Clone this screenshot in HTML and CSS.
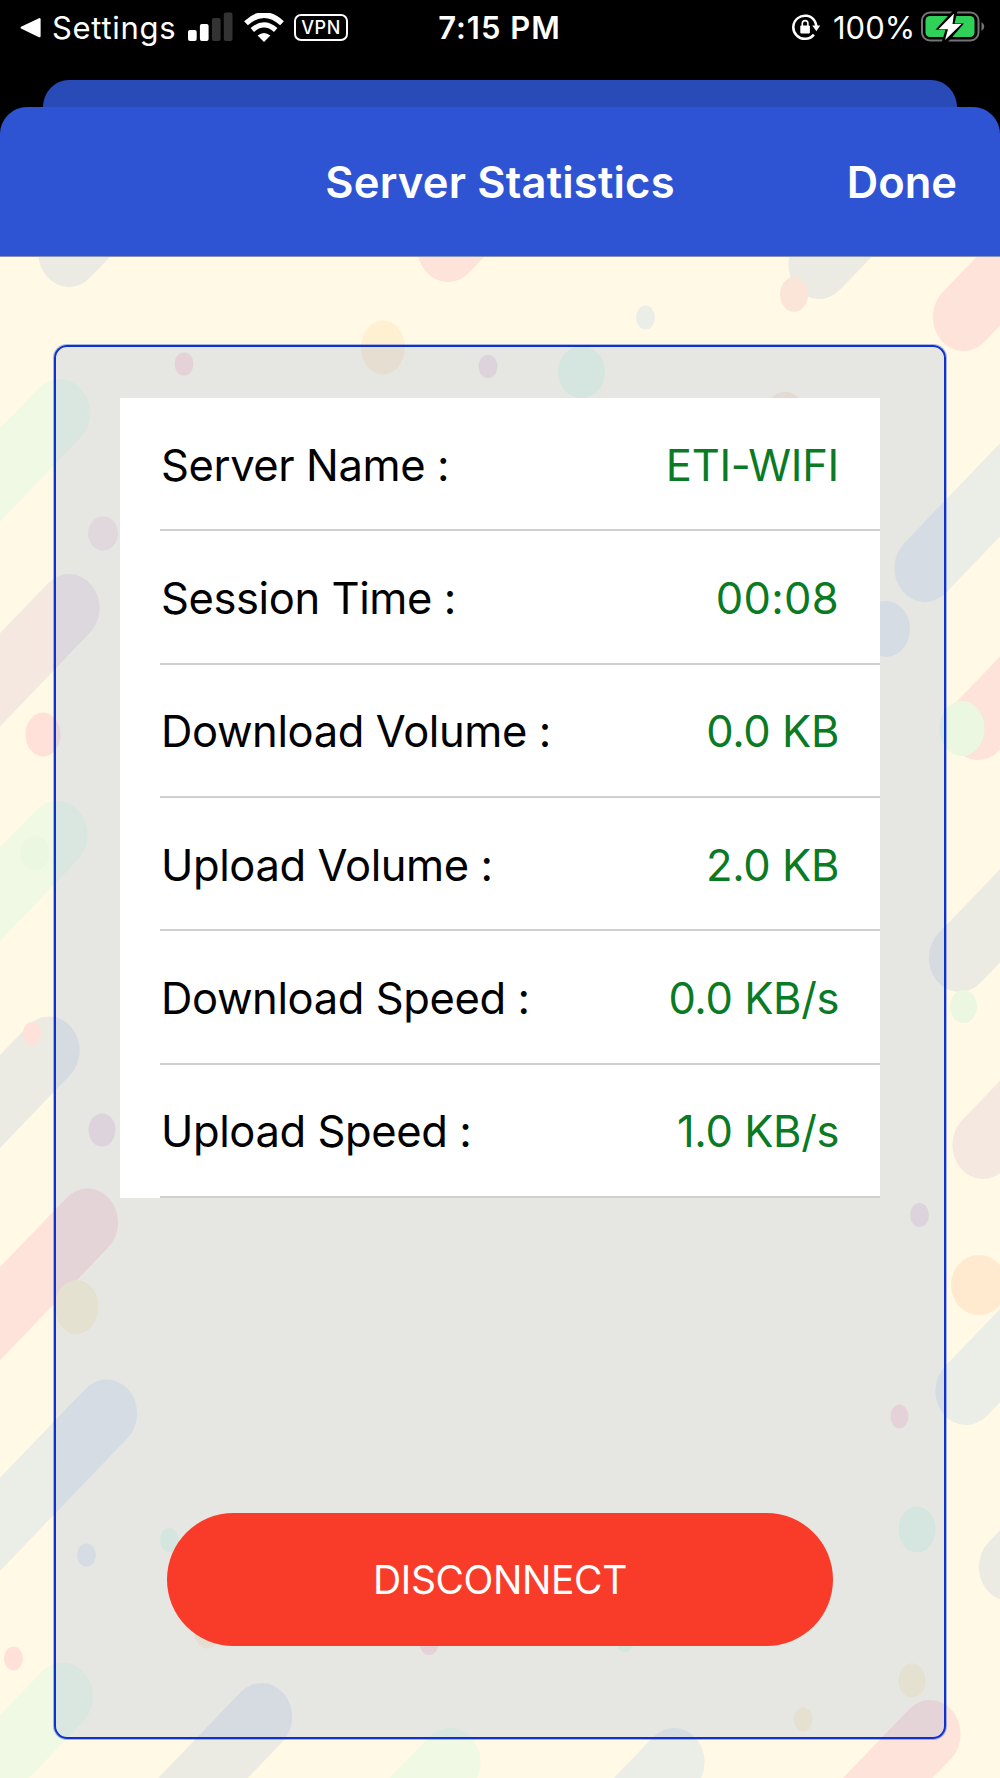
FILE: index.html
```html
<!DOCTYPE html>
<html lang="en">
<head>
<meta charset="utf-8">
<title>Server Statistics</title>
<link rel="stylesheet" href="styles.css">
</head>
<body>
<div class="screen">
  <div class="status-bar">
    <div class="status-left">
      <svg class="back-arrow" width="22" height="22" viewBox="0 0 22 22"><path d="M19 1.2 L1.5 9.6 Q-.5 10.7 1.5 11.8 L19 20.2 Q20.6 20.8 20.6 19 V2.4 Q20.6 .6 19 1.2Z" fill="#fff"/></svg>
      <span class="back-label">Settings</span>
      <svg class="signal" width="46" height="30" viewBox="0 0 46 30">
        <rect x="0" y="18" width="8.7" height="11" rx="2" fill="#fff"/>
        <rect x="11.9" y="12" width="8.7" height="17" rx="2" fill="#fff"/>
        <rect x="23.9" y="6" width="8.7" height="23" rx="2" fill="#333"/>
        <rect x="35.8" y="0.5" width="8.7" height="28.5" rx="2" fill="#333"/>
      </svg>
      <svg class="wifi" width="42" height="30" viewBox="0 0 42 30">
        <path d="M3 10.2 Q21 -6.2 39 10.2" fill="none" stroke="#fff" stroke-width="5.6"/>
        <path d="M9.3 17 Q21 6.8 32.7 17" fill="none" stroke="#fff" stroke-width="5.2"/>
        <path d="M14.6 22.6 Q21 17.2 27.4 22.6 L21 29Z" fill="#fff"/>
      </svg>
      <span class="vpn">VPN</span>
    </div>
    <div class="clock">7:15 PM</div>
    <div class="status-right">
      <svg class="lock" width="29" height="27" viewBox="0 0 29 27">
        <path d="M22.8 7.2 A11.6 11.6 0 1 0 21.9 20.6" fill="none" stroke="#fff" stroke-width="2.5"/>
        <path d="M20.2 11.6 H28.2 L24.4 17.2Z" fill="#fff"/>
        <path d="M22.6 7 Q24 9 24.3 12" fill="none" stroke="#fff" stroke-width="2.5"/>
        <rect x="8.3" y="11.6" width="9.6" height="8" rx="1" fill="#fff"/>
        <path d="M10.3 12 V9.4 a2.8 2.8 0 0 1 5.6 0 V12" fill="none" stroke="#fff" stroke-width="1.6"/>
      </svg>
      <span class="percent">100%</span>
      <svg class="battery" width="64" height="32" viewBox="0 0 64 32">
        <rect x="1" y="1.5" width="56.5" height="28" rx="8" fill="none" stroke="#747474" stroke-width="2"/>
        <path d="M60.5 11 Q63.2 12.5 63.2 15.5 Q63.2 18.5 60.5 20Z" fill="#747474"/>
        <rect x="4.5" y="5" width="49" height="21" rx="4.5" fill="#30d158"/>
        <path d="M31.5 0 L14.5 18.8 H24.5 L20.5 32 H26 L43 12.4 H33.5 L36.5 0Z" fill="#000"/>
        <path d="M33 2.5 L17.5 18.3 H27 L24 29 L40.5 12.9 H31.5Z" fill="#fff"/>
      </svg>
    </div>
  </div>
  <div class="sheet-behind"></div>
  <main class="sheet">
    <header class="nav-bar">
      <h1 class="nav-title">Server Statistics</h1>
      <button class="nav-done">Done</button>
    </header>
    <div class="content">
      <svg class="confetti" width="1000" height="1521" viewBox="0 257 1000 1521">
        <defs>
          <path id="up" d="M0 0 L300 281" transform="scale(.9 -1)"/>
          <path id="down" d="M0 0 L-300 281" transform="scale(.9 1)"/>
        </defs>
        <g class="streaks">
          <use href="#up" x="69" y="253" class="slate"/>
          <use href="#up" x="448" y="248" class="red"/>
          <use href="#up" x="819" y="265" class="slate"/>
          <use href="#up" x="963.5" y="317" class="red"/>
          <use href="#up" x="925" y="568" class="blue"/>
          <use href="#up" x="978" y="726" class="red"/>
          <use href="#up" x="959.5" y="958" class="slate"/>
          <use href="#up" x="983" y="1145" class="mauve"/>
          <use href="#up" x="966" y="1391" class="blue"/>
          <use href="#up" x="1009.5" y="1567" class="slate"/>
          <use href="#down" x="59.5" y="413" class="green"/>
          <use href="#down" x="69" y="608" class="mauve"/>
          <use href="#down" x="57" y="835" class="green"/>
          <use href="#down" x="49" y="1050.5" class="slate"/>
          <use href="#down" x="87.5" y="1222.5" class="red"/>
          <use href="#down" x="106.5" y="1413.5" class="blue"/>
          <use href="#down" x="62.5" y="1696.5" class="green"/>
          <use href="#down" x="261.5" y="1717" class="slate"/>
          <use href="#down" x="450" y="1762" class="green"/>
          <use href="#down" x="674" y="1762" class="blue"/>
          <use href="#down" x="930" y="1734" class="red"/>
        </g>
        <g class="dots">
          <ellipse cx="184" cy="364" rx="9.5" ry="11.5" class="pink"/>
          <ellipse cx="383" cy="347.5" rx="22" ry="27" class="amber"/>
          <ellipse cx="488" cy="366.5" rx="9.5" ry="11.5" class="violet"/>
          <ellipse cx="581.5" cy="372" rx="23.5" ry="26" class="teal"/>
          <ellipse cx="645.5" cy="317.5" rx="9.5" ry="12" class="blue"/>
          <ellipse cx="794" cy="294.5" rx="14" ry="17.5" class="coral"/>
          <ellipse cx="785" cy="410" rx="18" ry="18" class="peach"/>
          <ellipse cx="103" cy="533.5" rx="15" ry="17" class="rose"/>
          <ellipse cx="43" cy="734.5" rx="17.5" ry="22" class="red"/>
          <ellipse cx="35" cy="853" rx="14.5" ry="17" class="mint"/>
          <ellipse cx="886" cy="629" rx="24" ry="28" class="blue"/>
          <ellipse cx="962" cy="728.5" rx="22.5" ry="27.5" class="teal"/>
          <ellipse cx="32" cy="1033.5" rx="9" ry="11.5" class="red"/>
          <ellipse cx="102" cy="1130" rx="13.5" ry="16.5" class="violet"/>
          <ellipse cx="76.5" cy="1307" rx="22" ry="27" class="yellow"/>
          <ellipse cx="963.5" cy="1006.5" rx="13.5" ry="16.5" class="teal"/>
          <ellipse cx="919.5" cy="1215" rx="9.5" ry="12" class="violet"/>
          <ellipse cx="979" cy="1285" rx="28" ry="30" class="orange"/>
          <ellipse cx="899.5" cy="1416.5" rx="9" ry="12" class="pink"/>
          <ellipse cx="917" cy="1529.5" rx="18.5" ry="23" class="teal"/>
          <ellipse cx="86.5" cy="1555" rx="9.5" ry="11.5" class="blue"/>
          <ellipse cx="169.5" cy="1540" rx="9.5" ry="12" class="teal"/>
          <ellipse cx="207.5" cy="1632.5" rx="13" ry="16" class="amber"/>
          <ellipse cx="429" cy="1643" rx="9.5" ry="12" class="pink"/>
          <ellipse cx="625" cy="1640" rx="9.5" ry="12" class="teal"/>
          <ellipse cx="912" cy="1680.5" rx="13.5" ry="17" class="yellow"/>
          <ellipse cx="803" cy="1719.5" rx="9.5" ry="12" class="yellow"/>
          <ellipse cx="13.5" cy="1658.5" rx="9.5" ry="12" class="red"/>
        </g>
      </svg>
      <section class="card">
        <dl class="stats">
          <div class="row"><dt>Server Name :</dt><dd class="name">ETI-WIFI</dd></div>
          <div class="row"><dt>Session Time :</dt><dd class="time">00:08</dd></div>
          <div class="row"><dt>Download Volume :</dt><dd>0.0 KB</dd></div>
          <div class="row"><dt>Upload Volume :</dt><dd>2.0 KB</dd></div>
          <div class="row"><dt>Download Speed :</dt><dd>0.0 KB/s</dd></div>
          <div class="row"><dt>Upload Speed :</dt><dd>1.0 KB/s</dd></div>
        </dl>
        <button class="disconnect">DISCONNECT</button>
      </section>
    </div>
  </main>
</div>
</body>
</html>
```
FILE: styles.css
```css
* { box-sizing: border-box; }
body { margin: 0; background: #000; font-family: Inter, "Liberation Sans", sans-serif; }
button { border: 0; padding: 0; background: none; font-family: inherit; cursor: pointer; }

.screen { width: 1000px; height: 1778px; overflow: hidden; display: flex; flex-direction: column; background: #000; }

.status-bar { height: 80px; flex: none; display: grid; grid-template-columns: 400px 198px 402px; color: #fff; font-size: 31px; line-height: 56px; }
.status-left { display: flex; align-items: flex-start; padding-left: 20px; }
.back-arrow { margin-top: 17px; }
.back-label { width: 135px; margin-left: 10px; white-space: nowrap; letter-spacing: .7px; }
.signal { margin: 12px 0 0 1px; }
.wifi { margin: 13px 0 0 9px; }
.vpn { margin: 14px 0 0 9px; width: 54px; height: 27px; border: 2px solid #fff; border-radius: 7px; font-size: 18px; font-weight: 500; line-height: 24px; text-align: center; letter-spacing: .6px; }
.clock { text-align: center; font-weight: 600; white-space: nowrap; letter-spacing: 1px; padding-left: 1px; }
.status-right { display: flex; align-items: flex-start; padding-left: 194px; }
.lock { margin-top: 14px; }
.percent { width: 81px; margin-left: 12px; white-space: nowrap; }
.battery { margin: 11px 0 0 7px; }

.sheet-behind { flex: none; height: 27px; margin: 0 43px; background: #294bb8; border-radius: 26px 26px 0 0 / 27px 27px 0 0; }
.sheet { flex: 1; display: flex; flex-direction: column; border-radius: 27px 27px 0 0; overflow: hidden; }

.nav-bar { flex: none; height: 150px; display: grid; grid-template-columns: 1fr 360px 1fr; align-items: center; padding: 1px 43px 0; background: #2e54d3; color: #fff; border-bottom: 1px solid #8b93b4; }
.nav-title { grid-column: 2; margin: 0; text-align: center; white-space: nowrap; font-size: 43.5px; font-weight: 600; letter-spacing: .2px; }
.nav-done { justify-self: end; color: #fff; font-size: 43.5px; font-weight: 600; }

.content { flex: 1; display: grid; background: #fff9e5; }
.confetti { grid-area: 1 / 1; display: block; }
.streaks { fill: none; stroke-width: 68; stroke-linecap: round; }
.streaks .slate { stroke: #ebebe4; }
.streaks .blue { stroke: #ebede7; }
.streaks .red { stroke: #fde3da; }
.streaks .mauve { stroke: #f5e8e1; }
.streaks .green { stroke: #f0f9e3; }
.dots .pink { fill: #fde1da; }
.dots .red { fill: #ffe1d9; }
.dots .coral { fill: #fbe5d9; }
.dots .rose { fill: #f9e8e0; }
.dots .peach { fill: #fde9d4; }
.dots .amber { fill: #fff0d2; }
.dots .orange { fill: #ffead0; }
.dots .yellow { fill: #fdf2d1; }
.dots .violet { fill: #f5e2de; }
.dots .blue { fill: #ebede7; }
.dots .teal { fill: #ecf7e2; }
.dots .mint { fill: #ebf7e1; }

.card { grid-area: 1 / 1; z-index: 1; margin: 88px 54px 39px; border: 2px solid #0f31cc; border-radius: 13px; box-shadow: 0 0 0 1px rgba(18, 55, 207, .35); background: rgba(88, 128, 210, .15); display: flex; flex-direction: column; justify-content: space-between; align-items: center; padding: 51px 64px 91px; }
.stats { width: 760px; height: 800px; margin: 0; padding-left: 40px; display: grid; grid-template-rows: repeat(6, 1fr); background: #fff; font-size: 43.5px; }
.row { display: flex; justify-content: space-between; align-items: center; padding: 2px 41px 0 1px; border-bottom: 2px solid #d0d0d0; white-space: nowrap; letter-spacing: -.4px; }
dt { color: #000; }
dd { margin: 0; color: #0a7a24; }
dd.name { letter-spacing: -.3px; }
dd.time { letter-spacing: .3px; }

.disconnect { width: 666px; height: 133px; border-radius: 67px; background: #f93c2a; color: #fff; font-size: 39px; letter-spacing: -.4px; }
```
